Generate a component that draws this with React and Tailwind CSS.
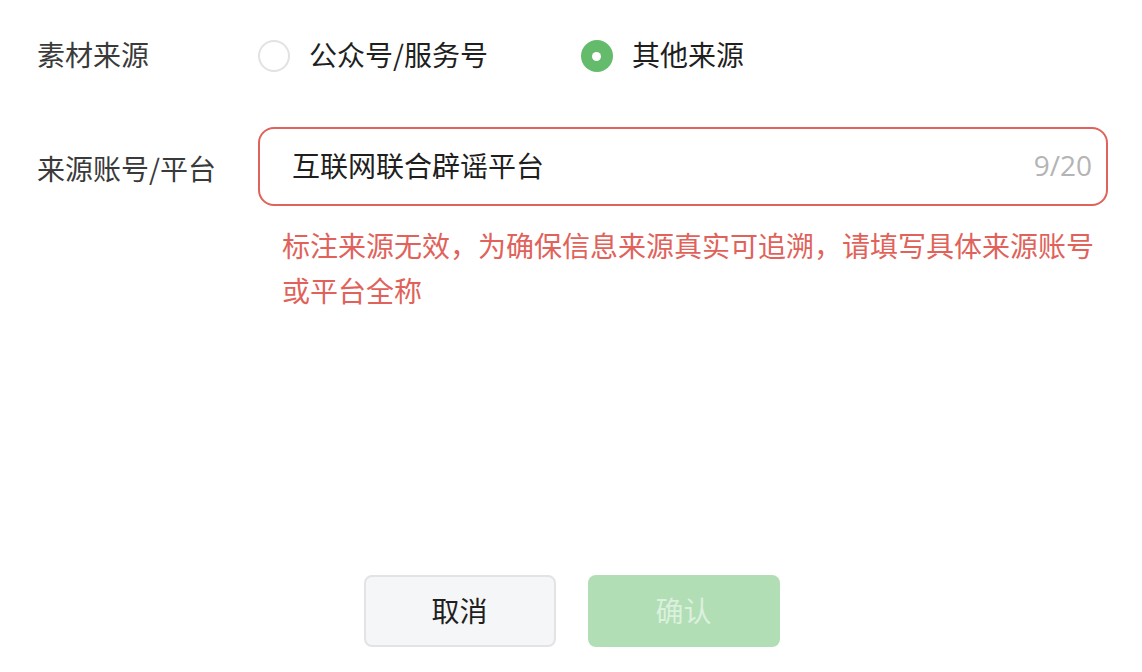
import React, { useState } from 'react';

const font = { fontFamily: '"Noto Sans CJK SC", "Noto Sans", sans-serif' };

const Radio = ({ checked, label, onClick, className = '' }) => (
    <button type="button" onClick={onClick} className={`flex items-center ${className}`}>
        {checked ? (
            <span className="flex h-[32px] w-[32px] items-center justify-center rounded-full bg-[#64bb6c]">
                <span className="h-[9px] w-[9px] rounded-full bg-white" />
            </span>
        ) : (
            <span className="h-[32px] w-[32px] rounded-full border-2 border-[#e2e2e2] bg-white" />
        )}
        <span className="ml-[19px] pb-[5px] text-[28px] leading-none text-[#1f1f1f]">{label}</span>
    </button>
);

const App = () => {
    const [source, setSource] = useState('other');
    const [value, setValue] = useState('互联网联合辟谣平台');

    return (
        <div className="min-h-[672px] w-full bg-white pl-[37px] pr-[34px] pt-[40px]" style={font}>
            {/* source type */}
            <div className="flex h-[32px] items-center">
                <div className="w-[221px] pb-[5px] text-[28px] leading-none text-[#3a3a3a]">素材来源</div>
                <Radio
                    checked={source === 'official'}
                    label="公众号/服务号"
                    onClick={() => setSource('official')}
                    className="mr-[93px]"
                />
                <Radio checked={source === 'other'} label="其他来源" onClick={() => setSource('other')} />
            </div>

            {/* account / platform */}
            <div className="mt-[55px] flex">
                <div className="w-[221px] pt-[21px] text-[28px] leading-[40px] text-[#3a3a3a]">来源账号/平台</div>
                <div className="flex-1">
                    <div className="flex h-[79px] items-center rounded-[16px] border-2 border-[#e0625a] pl-[32px] pr-[14px]">
                        <input
                            value={value}
                            maxLength={20}
                            onChange={(e) => setValue(e.target.value)}
                            className="mb-[3px] min-w-0 flex-1 bg-transparent text-[28px] text-[#1f1f1f] outline-none"
                        />
                        <span
                            className="mb-[3px] text-[28px] text-[#b4b4b4]"
                            style={{ fontFamily: '"Open Sans", "Noto Sans", sans-serif' }}
                        >
                            {value.length}/20
                        </span>
                    </div>
                    <p className="mt-[17px] pl-[24px] pr-[8px] text-[28px] leading-[45px] text-[#e0625a]">
                        标注来源无效，为确保信息来源真实可追溯，请填写具体来源账号或平台全称
                    </p>
                </div>
            </div>

            {/* actions */}
            <div className="mt-[262px] flex justify-center gap-[32px] pr-[2px]">
                <button
                    type="button"
                    className="h-[72px] w-[192px] rounded-[8px] border-2 border-[#e3e3e5] bg-[#f5f6f7] pb-[2px] text-[28px] text-[#1f1f1f]"
                >
                    取消
                </button>
                <button
                    type="button"
                    disabled
                    className="h-[72px] w-[192px] rounded-[8px] bg-[#b1deb5] pb-[2px] text-[28px] text-[#dcf0de]"
                >
                    确认
                </button>
            </div>
        </div>
    );
};

export default App;
